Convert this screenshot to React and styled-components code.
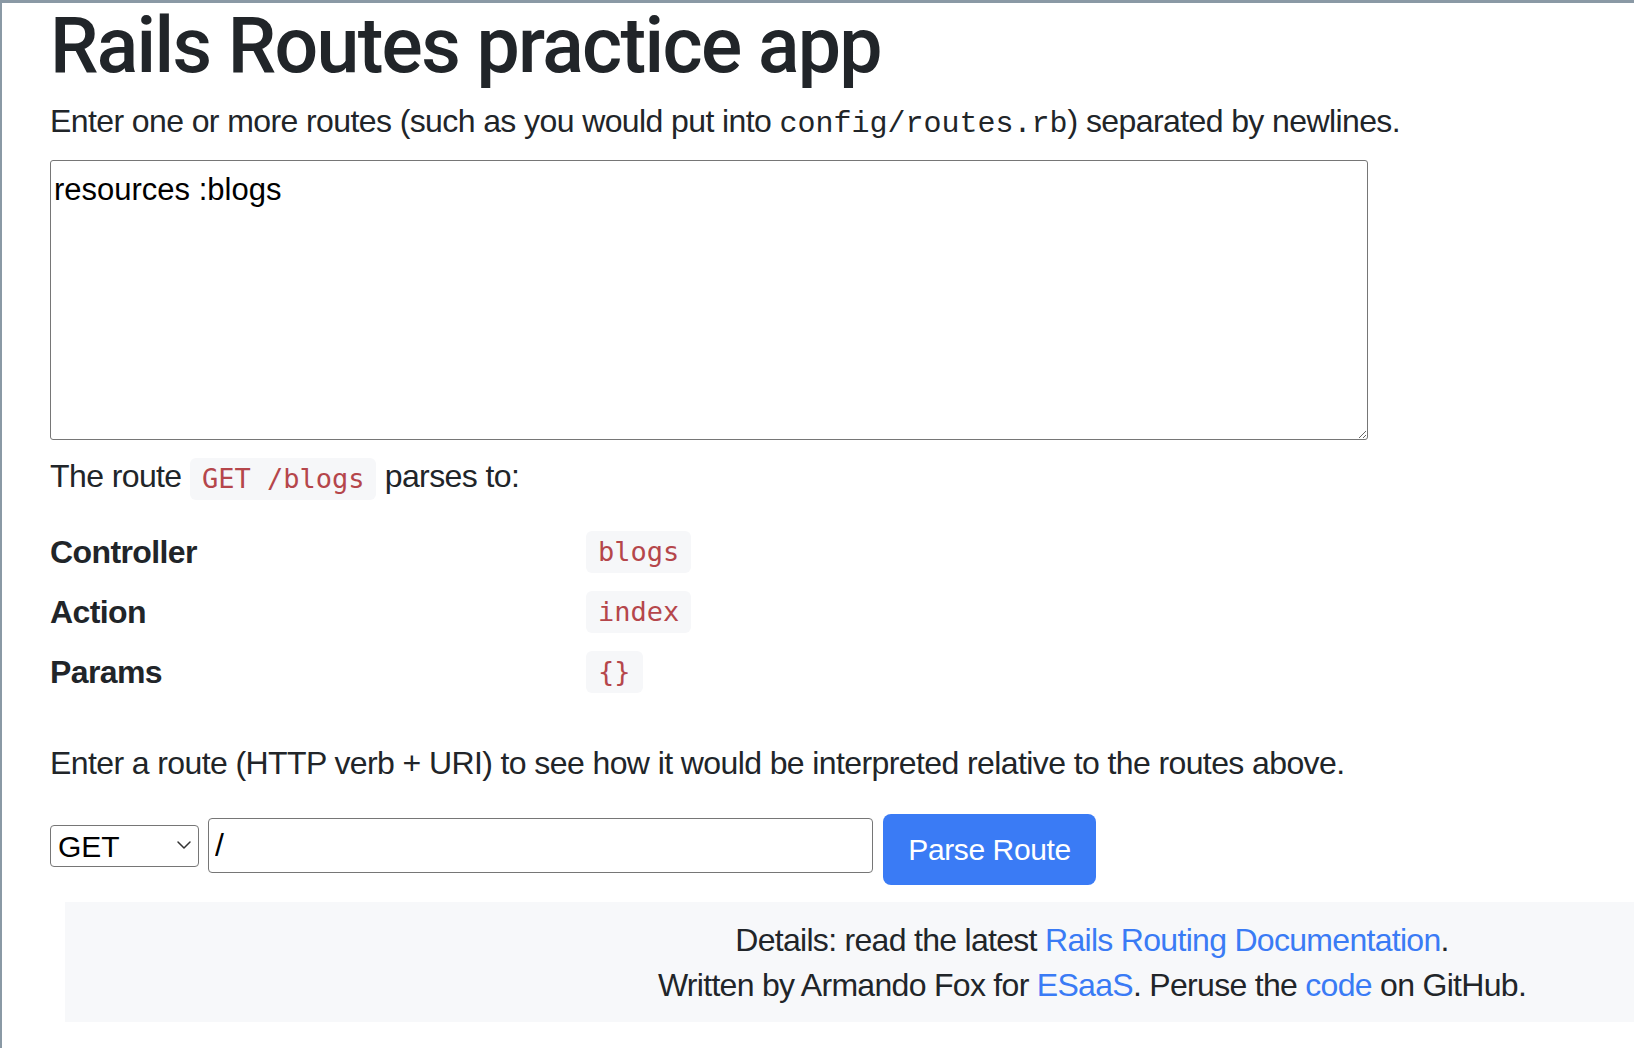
import React from "react";
import styled, { createGlobalStyle } from "styled-components";

const GlobalStyle = createGlobalStyle`
  html, body {
    margin: 0;
    padding: 0;
    background: #ffffff;
  }
  body {
    font-family: "Liberation Sans", Arial, sans-serif;
    color: #212529;
  }
  * {
    box-sizing: border-box;
  }
`;

const Frame = styled.div`
  min-height: 100vh;
  border-top: 3px solid #8a99a5;
  border-left: 2px solid #8a99a5;
  overflow: hidden;
`;

const Main = styled.main`
  padding-left: 48px;
`;

const Title = styled.h1`
  margin: 0;
  font-family: Roboto, "Liberation Sans", Arial, sans-serif;
  font-size: 77px;
  line-height: 87px;
  font-weight: 500;
  letter-spacing: -1.7px;
  color: #212529;
`;

const Text = styled.p`
  margin: ${(p) => p.$mt || 0}px 0 0 0;
  font-size: 32px;
  line-height: 48px;
  letter-spacing: -0.6px;
`;

const FileName = styled.code`
  font-family: "Liberation Mono", "Courier New", monospace;
  font-size: 30px;
  letter-spacing: 0;
  color: #212529;
`;

const RoutesBox = styled.textarea`
  display: block;
  margin-top: 12px;
  width: 1318px;
  height: 280px;
  padding: 11px 3px 4px;
  border: 1px solid #767676;
  border-radius: 3px;
  font-family: "Liberation Sans", Arial, sans-serif;
  font-size: 31px;
  line-height: 1.15;
  color: #000;
  resize: both;
  outline: none;
`;

const Code = styled.code`
  display: inline-block;
  padding: 5px 12px;
  border-radius: 6px;
  background: #f6f7f9;
  color: #b5464b;
  font-family: "DejaVu Sans Mono", monospace;
  font-size: 27px;
  line-height: 32px;
  letter-spacing: 0;
  vertical-align: middle;
`;

const ResultGrid = styled.dl`
  margin: 22px 0 0 0;
  display: grid;
  grid-template-columns: 536px 1fr;
  grid-auto-rows: 60px;
  align-items: center;
`;

const Label = styled.dt`
  font-size: 32px;
  font-weight: 700;
  letter-spacing: -0.6px;
  line-height: 48px;
`;

const Value = styled.dd`
  margin: 0;
`;

const Controls = styled.form`
  margin-top: 27px;
  display: flex;
  align-items: flex-start;
`;

const SelectWrap = styled.div`
  position: relative;
  margin-top: 11px;
  width: 149px;
  height: 42px;
`;

const Select = styled.select`
  appearance: none;
  width: 100%;
  height: 100%;
  padding: 0 0 0 7px;
  border: 1px solid #767676;
  border-radius: 4px;
  background: #fff;
  font-family: "Liberation Sans", Arial, sans-serif;
  font-size: 30px;
  color: #000;
  outline: none;
`;

const Chevron = styled.svg`
  position: absolute;
  right: 7px;
  top: 14px;
  pointer-events: none;
`;

const UriInput = styled.input`
  margin: 4px 0 0 9px;
  width: 665px;
  height: 55px;
  padding: 0 6px;
  border: 1px solid #767676;
  border-radius: 4px;
  font-family: "Liberation Sans", Arial, sans-serif;
  font-size: 32px;
  color: #000;
  outline: none;
`;

const Button = styled.button`
  margin-left: 10px;
  width: 213px;
  height: 71px;
  border: none;
  border-radius: 8px;
  background: #3a7bf5;
  color: #fff;
  font-family: "Liberation Sans", Arial, sans-serif;
  font-size: 30px;
  letter-spacing: -0.4px;
  cursor: pointer;
`;

const Footer = styled.footer`
  margin: 17px 0 0 63px;
  padding: 16px 0 14px 485px;
  background: #f7f8fa;
  text-align: center;
  font-size: 32px;
  line-height: 45px;
  letter-spacing: -0.7px;
`;

const FootLine = styled.div``;

const Link = styled.a`
  color: #3a7bf5;
  text-decoration: none;
`;

const results = [
  { label: "Controller", value: "blogs" },
  { label: "Action", value: "index" },
  { label: "Params", value: "{}" },
];

export default function App() {
  return (
    <>
      <GlobalStyle />
      <Frame>
        <Main>
          <Title>Rails Routes practice app</Title>
          <Text $mt={7}>
            Enter one or more routes (such as you would put into{" "}
            <FileName>config/routes.rb</FileName>) separated by newlines.
          </Text>
          <RoutesBox defaultValue="resources :blogs" spellCheck={false} />
          <Text $mt={12}>
            The route <Code>GET /blogs</Code> parses to:
          </Text>
          <ResultGrid>
            {results.map((r) => (
              <React.Fragment key={r.label}>
                <Label>{r.label}</Label>
                <Value>
                  <Code>{r.value}</Code>
                </Value>
              </React.Fragment>
            ))}
          </ResultGrid>
          <Text $mt={37}>
            Enter a route (HTTP verb + URI) to see how it would be interpreted
            relative to the routes above.
          </Text>
          <Controls onSubmit={(e) => e.preventDefault()}>
            <SelectWrap>
              <Select defaultValue="GET">
                <option>GET</option>
                <option>POST</option>
                <option>PUT</option>
                <option>PATCH</option>
                <option>DELETE</option>
              </Select>
              <Chevron width="16" height="12" viewBox="0 0 16 12">
                <path
                  d="M2 3 L8 9 L14 3"
                  fill="none"
                  stroke="#333"
                  strokeWidth="1.5"
                  strokeLinecap="round"
                  strokeLinejoin="round"
                />
              </Chevron>
            </SelectWrap>
            <UriInput defaultValue="/" />
            <Button type="submit">Parse Route</Button>
          </Controls>
        </Main>
        <Footer>
          <FootLine>
            Details: read the latest{" "}
            <Link href="#">Rails Routing Documentation</Link>.
          </FootLine>
          <FootLine>
            Written by Armando Fox for <Link href="#">ESaaS</Link>. Peruse the{" "}
            <Link href="#">code</Link> on GitHub.
          </FootLine>
        </Footer>
      </Frame>
    </>
  );
}
